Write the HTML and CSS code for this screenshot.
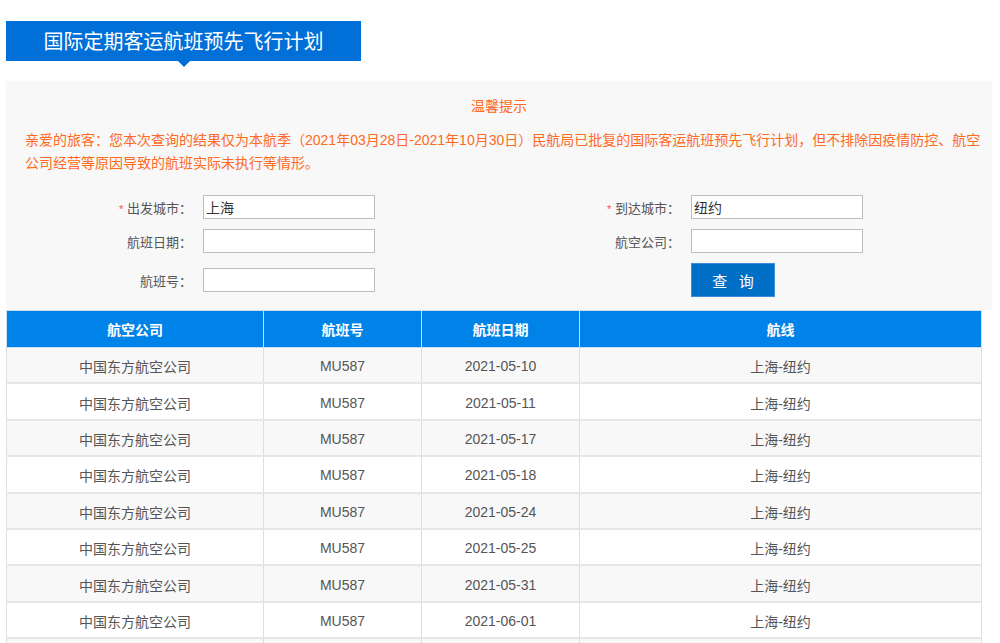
FILE: index.html
```html
<!DOCTYPE html>
<html lang="zh-CN">
<head>
<meta charset="utf-8">
<title>国际定期客运航班预先飞行计划</title>
<link rel="stylesheet" href="styles.css">
</head>
<body>
<div class="page">
  <div class="title-bar">国际定期客运航班预先飞行计划</div>
  <div class="panel">
    <div class="notice-title">温馨提示</div>
    <p class="notice">亲爱的旅客：您本次查询的结果仅为本航季（2021年03月28日-2021年10月30日）民航局已批复的国际客运航班预先飞行计划，但不排除因疫情防控、航空公司经营等原因导致的航班实际未执行等情形。</p>
    <form class="search">
      <label class="lbl"><span class="req">*</span> 出发城市：</label>
      <input class="field" type="text" value="上海">
      <label class="lbl"><span class="req">*</span> 到达城市：</label>
      <input class="field" type="text" value="纽约">
      <label class="lbl">航班日期：</label>
      <input class="field" type="text" value="">
      <label class="lbl">航空公司：</label>
      <input class="field" type="text" value="">
      <label class="lbl">航班号：</label>
      <input class="field" type="text" value="">
      <span></span>
      <button class="btn" type="button">查 询</button>
    </form>
  </div>
  <table class="grid">
    <thead>
      <tr><th class="c1">航空公司</th><th class="c2">航班号</th><th class="c3">航班日期</th><th>航线</th></tr>
    </thead>
    <tbody>
      <tr><td>中国东方航空公司</td><td>MU587</td><td>2021-05-10</td><td>上海-纽约</td></tr>
      <tr><td>中国东方航空公司</td><td>MU587</td><td>2021-05-11</td><td>上海-纽约</td></tr>
      <tr><td>中国东方航空公司</td><td>MU587</td><td>2021-05-17</td><td>上海-纽约</td></tr>
      <tr><td>中国东方航空公司</td><td>MU587</td><td>2021-05-18</td><td>上海-纽约</td></tr>
      <tr><td>中国东方航空公司</td><td>MU587</td><td>2021-05-24</td><td>上海-纽约</td></tr>
      <tr><td>中国东方航空公司</td><td>MU587</td><td>2021-05-25</td><td>上海-纽约</td></tr>
      <tr><td>中国东方航空公司</td><td>MU587</td><td>2021-05-31</td><td>上海-纽约</td></tr>
      <tr><td>中国东方航空公司</td><td>MU587</td><td>2021-06-01</td><td>上海-纽约</td></tr>
      <tr><td>中国东方航空公司</td><td>MU587</td><td>2021-06-07</td><td>上海-纽约</td></tr>
      <tr><td>中国东方航空公司</td><td>MU587</td><td>2021-06-08</td><td>上海-纽约</td></tr>
    </tbody>
  </table>
</div>
</body>
</html>
```

FILE: styles.css
```css
html, body {
  margin: 0;
  padding: 0;
  background: #fff;
}
body {
  font-family: "Liberation Sans", "Noto Sans CJK SC", sans-serif;
  font-size: 14px;
  color: #555;
}
.page {
  padding: 21px 0 0 6px;
}
.title-bar {
  position: relative;
  width: 355px;
  height: 40px;
  line-height: 40px;
  background: #006fd8;
  color: #fff;
  font-size: 20px;
  text-align: center;
  font-family: "Noto Sans CJK SC", sans-serif;
}
.title-bar::after {
  content: "";
  position: absolute;
  left: 172px;
  top: 40px;
  border-left: 6px solid transparent;
  border-right: 6px solid transparent;
  border-top: 6px solid #006fd8;
}
.panel {
  margin-top: 20px;
  width: 986px;
  background: #f8f8f8;
  padding: 14px 0 13px;
  box-sizing: border-box;
}
.notice-title {
  text-align: center;
  color: #ff6a1e;
  line-height: 23px;
}
.notice {
  margin: 11px 0 0;
  padding: 0 6px 0 19px;
  color: #ff6a1e;
  line-height: 23px;
}
.search {
  margin-top: 20px;
  display: grid;
  grid-template-columns: 186px 172px 294px 172px;
  column-gap: 11px;
  row-gap: 10px;
  align-items: center;
}
.lbl {
  text-align: right;
  color: #555;
  font-size: 13px;
}
.req {
  color: #f05050;
  font-size: 11px;
}
.field {
  width: 172px;
  height: 24px;
  box-sizing: border-box;
  border: 1px solid #bdbdbd;
  background: #fff;
  padding: 0 2px;
  font-family: "Liberation Sans", "Noto Sans CJK SC", sans-serif;
  font-size: 14px;
  color: #333;
  outline: none;
}
.btn {
  width: 84px;
  height: 34px;
  background: #0070c6;
  border: 1px solid #3a8ed8;
  color: #fff;
  font-family: "Noto Sans CJK SC", sans-serif;
  font-size: 15px;
  letter-spacing: 4px;
  padding: 0 0 0 4px;
  cursor: pointer;
}
.grid {
  width: 976px;
  border-collapse: collapse;
  margin-top: 0;
  table-layout: fixed;
}
.grid th, .grid td {
  border: 1px solid #dedede;
  text-align: center;
  padding: 0;
}
.grid th {
  background: #0083e8;
  color: #fff;
  font-weight: bold;
  height: 36px;
  border-color: #c8ddee;
  font-family: "Noto Sans CJK SC", sans-serif;
}
.grid .c1 { width: 256px; }
.grid .c2 { width: 157px; }
.grid .c3 { width: 157px; }
.grid td {
  height: 32.4px;
  padding-top: 2px;
  color: #555;
  border-bottom: 2px solid #e6e6e6;
}
.grid tbody tr:nth-child(odd) td {
  background: #f8f8f8;
}
.grid tbody tr:nth-child(even) td {
  background: #fff;
}
```
